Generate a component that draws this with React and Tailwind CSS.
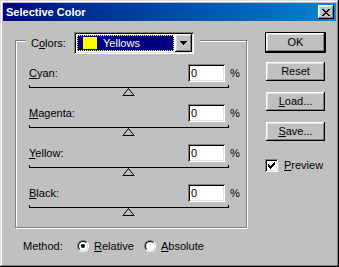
import React from "react";

const raised =
  "shadow-[inset_-1px_-1px_0_#000,inset_1px_1px_0_#fff,inset_-2px_-2px_0_#808080,inset_2px_2px_0_#dfdfdf]";
const sunken =
  "shadow-[inset_1px_1px_0_#808080,inset_-1px_-1px_0_#fff,inset_2px_2px_0_#000,inset_-2px_-2px_0_#dfdfdf]";

function Slider() {
  return (
    <svg width="200" height="12" className="block mt-[2px]" shapeRendering="crispEdges">
      <line x1="0" y1="3.5" x2="200" y2="3.5" stroke="#000" strokeWidth="1" />
      <line x1="0.5" y1="1" x2="0.5" y2="4" stroke="#000" strokeWidth="1" />
      <line x1="199.5" y1="1" x2="199.5" y2="4" stroke="#000" strokeWidth="1" />
      <polygon
        points="99.5,4.5 105,11.5 94,11.5"
        fill="#c0c0c0"
        stroke="#000"
        strokeWidth="1"
        shapeRendering="geometricPrecision"
      />
    </svg>
  );
}

function Row({ u, rest }) {
  return (
    <div className="h-[40px] pl-[13px]">
      <div className="flex h-[18px] items-center">
        <div className="w-[159px]">
          <u>{u}</u>
          {rest}
        </div>
        <div className={`w-[37px] h-[18px] bg-white ${sunken} flex items-center pl-[3px]`}>0</div>
        <div className="ml-[5px]">%</div>
      </div>
      <Slider />
    </div>
  );
}

function Button({ children, extra = "" }) {
  return (
    <div className={`w-[59px] h-[19px] flex items-center justify-center bg-[#c0c0c0] ${raised} ${extra}`}>
      {children}
    </div>
  );
}

function Radio({ checked }) {
  return (
    <div className="w-[12px] h-[12px] rounded-full border border-t-[#808080] border-l-[#808080] border-b-white border-r-white">
      <div className="w-full h-full rounded-full border border-t-black border-l-black border-b-[#dfdfdf] border-r-[#dfdfdf] bg-white flex items-center justify-center">
        {checked && <div className="w-[4px] h-[4px] rounded-full bg-black" />}
      </div>
    </div>
  );
}

export default function App() {
  return (
    <div
      className="w-[339px] h-[267px] bg-[#c0c0c0] p-[3px] flex flex-col text-[11px] leading-none text-black shadow-[inset_-1px_-1px_0_#000,inset_1px_1px_0_#dfdfdf,inset_-2px_-2px_0_#808080,inset_2px_2px_0_#fff]"
      style={{ fontFamily: '"Liberation Sans", Arial, sans-serif' }}
    >
      {/* Title bar */}
      <div className="h-[18px] flex items-center justify-between pl-[3px] pr-[2px] bg-gradient-to-r from-[#000080] to-[#1084d0]">
        <span className="text-white font-bold text-[11px]">Selective Color</span>
        <div className={`w-[16px] h-[14px] bg-[#c0c0c0] ${raised} flex items-center justify-center`}>
          <svg width="8" height="7" viewBox="0 0 8 7" shapeRendering="crispEdges">
            <path d="M0 0h2v1h1v1h2v-1h1v-1h2v1h-1v1h-1v1h-1v1h1v1h1v1h1v1h-2v-1h-1v-1h-2v1h-1v1h-2v-1h1v-1h1v-1h1v-1h-1v-1h-1v-1h-1z" fill="#000" />
          </svg>
        </div>
      </div>

      <div className="flex flex-1">
        {/* Left column */}
        <div className="w-[262px] flex flex-col">
          <div className="ml-[12px] mt-[19px] w-[232px] h-[188px] border border-[#808080] shadow-[inset_1px_1px_0_#fff,1px_1px_0_#fff] flex flex-col">
            {/* Legend */}
            <div className="self-start -mt-[9px] ml-[10px] h-[22px] bg-[#c0c0c0] pl-[5px] pr-[6px] flex items-center">
              <div className="w-[43px]">
                C<u>o</u>lors:
              </div>
              <div className={`w-[120px] h-[22px] bg-white ${sunken} p-[2px] flex`}>
                <div className="flex-1 m-[1px] bg-[#000080] border border-dotted border-[#ffff60] flex items-center pl-[5px] text-white">
                  <div className="w-[14px] h-[12px] bg-[#ffff00]" />
                  <span className="ml-[6px]">Yellows</span>
                </div>
                <div className={`w-[17px] h-[18px] bg-[#c0c0c0] ${raised} flex items-center justify-center`}>
                  <svg width="7" height="4" viewBox="0 0 7 4" shapeRendering="crispEdges">
                    <path d="M0 0h7v1h-1v1h-1v1h-1v1h-1v-1h-1v-1h-1v-1h-1z" fill="#000" />
                  </svg>
                </div>
              </div>
            </div>

            <div className="mt-[10px]">
              <Row u="C" rest="yan:" />
              <Row u="M" rest="agenta:" />
              <Row u="Y" rest="ellow:" />
              <Row u="B" rest="lack:" />
            </div>
          </div>

          {/* Method */}
          <div className="mt-[10px] ml-[20px] h-[16px] flex items-center">
            <div className="w-[54px]">Method:</div>
            <div className="w-[67px] flex items-center">
              <Radio checked />
              <span className="ml-[5px]">
                <u>R</u>elative
              </span>
            </div>
            <div className="flex items-center">
              <Radio />
              <span className="ml-[5px]">
                <u>A</u>bsolute
              </span>
            </div>
          </div>
        </div>

        {/* Right column */}
        <div className="flex flex-col mt-[11px]">
          <div className="w-[61px] h-[21px] border border-black">
            <Button>OK</Button>
          </div>
          <div className="ml-[1px] mt-[9px]">
            <Button>Reset</Button>
          </div>
          <div className="ml-[1px] mt-[11px]">
            <Button>
              <span>
                <u>L</u>oad...
              </span>
            </Button>
          </div>
          <div className="ml-[1px] mt-[11px]">
            <Button>
              <span>
                <u>S</u>ave...
              </span>
            </Button>
          </div>
          <div className="mt-[18px] flex items-center">
            <div className={`w-[13px] h-[13px] bg-white ${sunken} flex items-center justify-center`}>
              <svg width="7" height="7" viewBox="0 0 7 7" shapeRendering="crispEdges">
                <path d="M6 0h1v3h-1v1h-1v1h-1v1h-1v1h-1v-1h-1v-1h-1v-3h1v1h1v1h1v-1h1v-1h1z" fill="#000" />
              </svg>
            </div>
            <span className="ml-[6px]">
              <u>P</u>review
            </span>
          </div>
        </div>
      </div>
    </div>
  );
}
